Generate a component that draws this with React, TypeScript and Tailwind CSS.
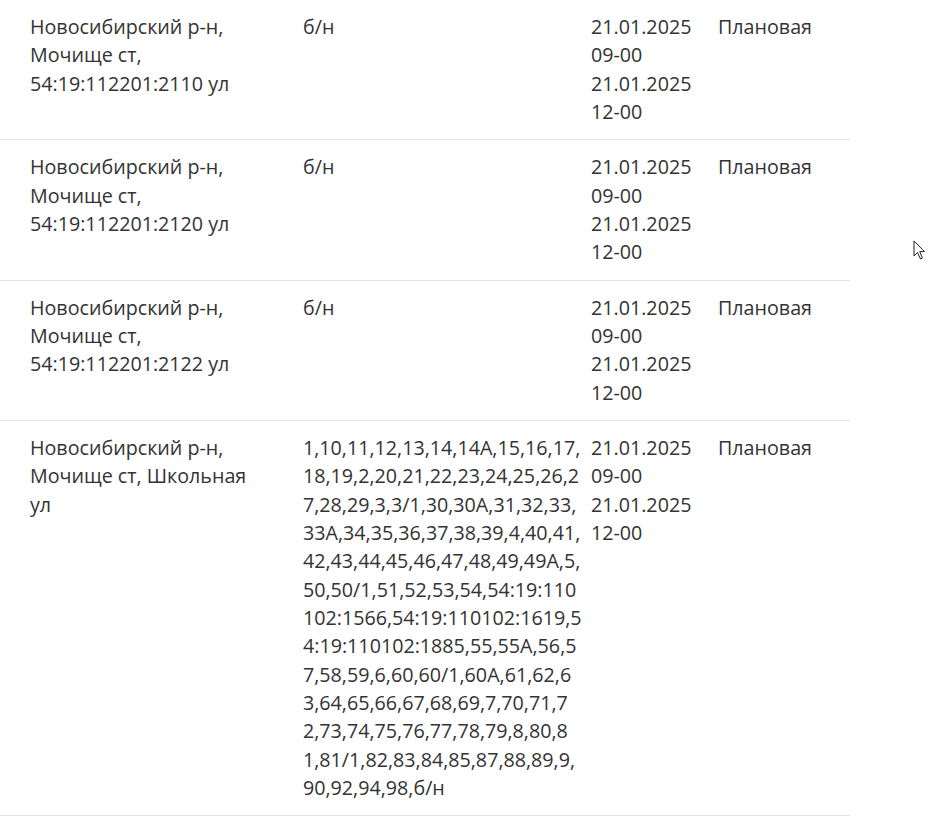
import React from 'react';

interface Outage {
  address: string;
  houses: string;
  from: string;
  to: string;
  kind: string;
}

const rows: Outage[] = [
  {
    address: 'Новосибирский р-н, Мочище ст, 54:19:112201:2110 ул',
    houses: 'б/н',
    from: '21.01.2025 09-00',
    to: '21.01.2025 12-00',
    kind: 'Плановая',
  },
  {
    address: 'Новосибирский р-н, Мочище ст, 54:19:112201:2120 ул',
    houses: 'б/н',
    from: '21.01.2025 09-00',
    to: '21.01.2025 12-00',
    kind: 'Плановая',
  },
  {
    address: 'Новосибирский р-н, Мочище ст, 54:19:112201:2122 ул',
    houses: 'б/н',
    from: '21.01.2025 09-00',
    to: '21.01.2025 12-00',
    kind: 'Плановая',
  },
  {
    address: 'Новосибирский р-н, Мочище ст, Школьная ул',
    houses:
      '1,10,11,12,13,14,14А,15,16,17,18,19,2,20,21,22,23,24,25,26,27,28,29,3,3/1,30,30А,31,32,33,33А,34,35,36,37,38,39,4,40,41,42,43,44,45,46,47,48,49,49А,5,50,50/1,51,52,53,54,54:19:110102:1566,54:19:110102:1619,54:19:110102:1885,55,55А,56,57,58,59,6,60,60/1,60А,61,62,63,64,65,66,67,68,69,7,70,71,72,73,74,75,76,77,78,79,8,80,81,81/1,82,83,84,85,87,88,89,9,90,92,94,98,б/н',
    from: '21.01.2025 09-00',
    to: '21.01.2025 12-00',
    kind: 'Плановая',
  },
];

const Cursor = () => (
  <svg
    className="absolute left-[913px] top-[240px]"
    width="14"
    height="21"
    viewBox="0 0 14 21"
  >
    <path
      d="M1 1 L1 16 L4.5 12.5 L7.5 19 L9.5 18 L6.7 11.6 L11.5 11.6 Z"
      fill="#fff"
      stroke="#222"
      strokeWidth="1"
      strokeLinejoin="round"
    />
  </svg>
);

export default function App() {
  return (
    <div
      className="relative min-h-[822px] w-[930px] overflow-hidden bg-white text-[#333] text-[19.7px] leading-[28.33px]"
      style={{ fontFamily: '"Open Sans", "Noto Sans", sans-serif' }}
    >
      <div className="w-[850px]">
        {rows.map((row, i) => (
          <div key={i} className="flex border-b border-[#e2e2e2] py-[13px]">
            <div className="w-[303px] shrink-0 pl-[30px] pr-[40px]">{row.address}</div>
            <div className="w-[288px] shrink-0 pr-[9px] break-all">{row.houses}</div>
            <div className="w-[127px] shrink-0">
              <div>{row.from.split(' ')[0]}</div>
              <div>{row.from.split(' ')[1]}</div>
              <div>{row.to.split(' ')[0]}</div>
              <div>{row.to.split(' ')[1]}</div>
            </div>
            <div className="flex-1">{row.kind}</div>
          </div>
        ))}
      </div>
      <Cursor />
    </div>
  );
}
